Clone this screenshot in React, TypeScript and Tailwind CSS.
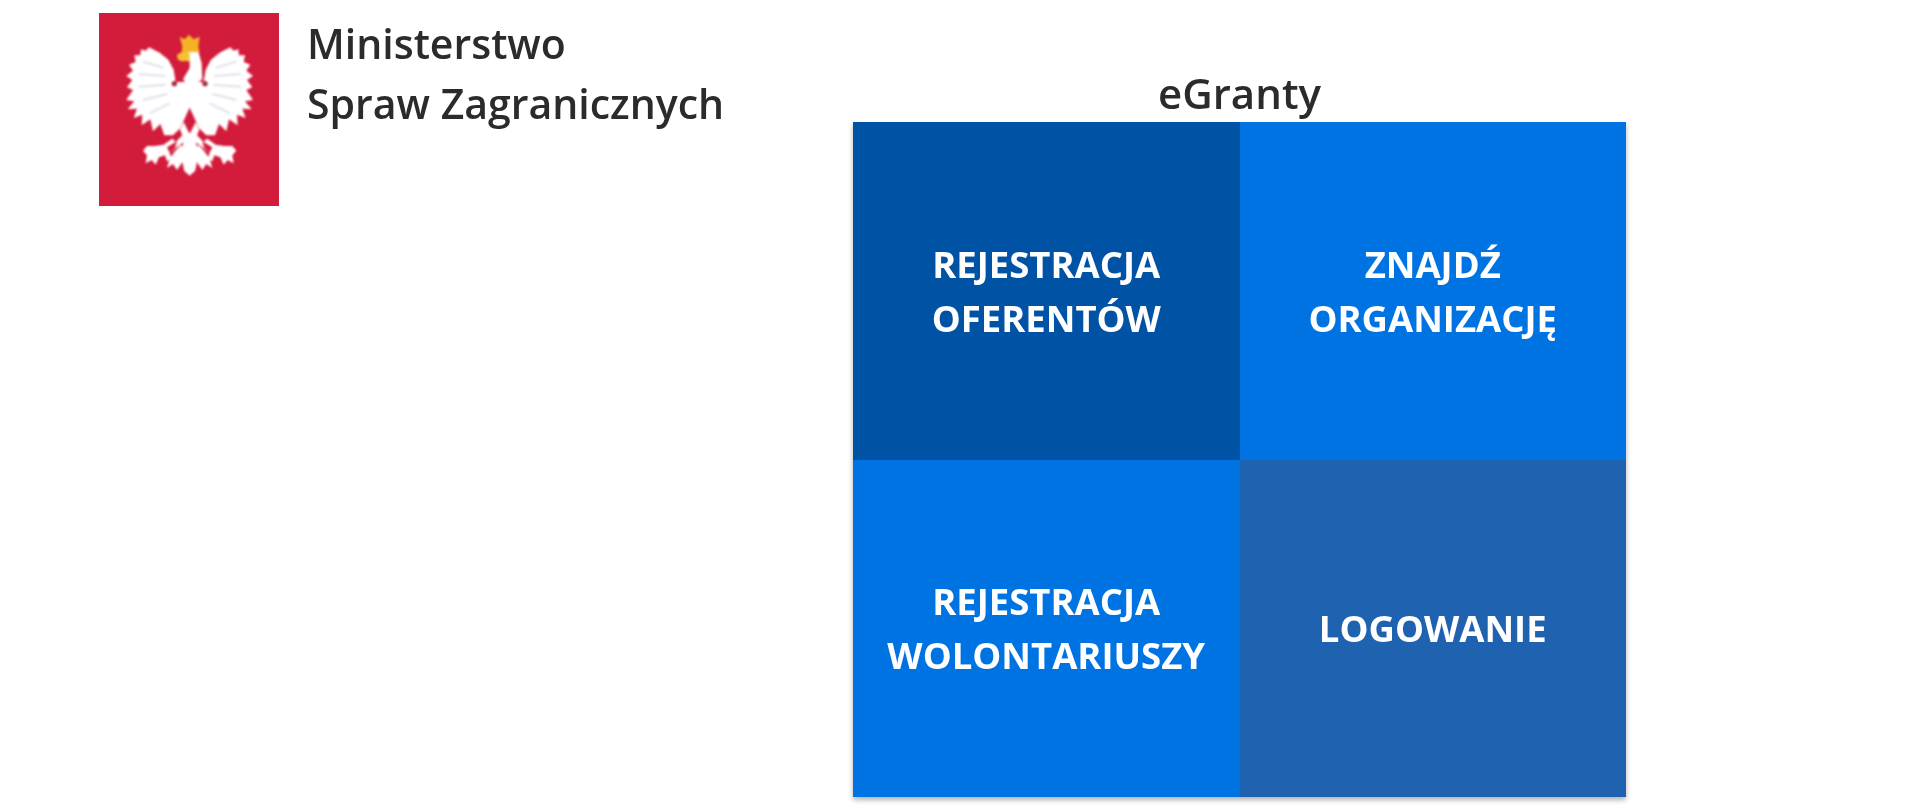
const font = "font-['Open_Sans','Liberation_Sans',sans-serif]";

const tiles = [
    { lines: ['REJESTRACJA', 'OFERENTÓW'], color: 'bg-[#0052a5]' },
    { lines: ['ZNAJDŹ', 'ORGANIZACJĘ'], color: 'bg-[#0073e2]' },
    { lines: ['REJESTRACJA', 'WOLONTARIUSZY'], color: 'bg-[#0073e2]' },
    { lines: ['LOGOWANIE'], color: 'bg-[#1f63b0]' },
];

// half of the eagle, the other half is mirrored around x=300
function EagleHalf() {
    return (
        <g>
            {/* wing */}
            <path fill="#fff" d="M258 232 L252 195 L236 165 L210 144 L178 128 L168 138 L154 134 L152 152 L134 152 L138 172 L118 180 L130 198 L110 214 L128 226 L112 248 L130 256 L110 286 L134 290 L114 314 L142 312 L132 340 L158 330 L156 362 L182 344 L190 380 L212 358 L224 392 L262 392 L304 300 L304 232 Z" />
            {/* feather shading */}
            <path fill="none" stroke="#dde1e9" strokeWidth="6" d="M222 190 L160 170 M226 214 L148 208 M228 240 L146 246 M232 268 L160 286 M240 296 L180 326" />
            {/* leg and talons */}
            <path fill="#fff" d="M282 352 L262 392 L222 420 L196 424 L172 424 L160 438 L172 452 L168 476 L186 466 L198 480 L208 458 L226 452 L232 470 L246 462 L240 444 L272 420 L304 396 Z" />
            <path fill="#fff" d="M274 420 L256 440 L240 462 L232 490 L250 478 L262 496 L276 476 L284 440 Z" />
            {/* tail */}
            <path fill="#fff" d="M286 386 L280 420 L268 446 L262 482 L278 472 L284 500 L300 512 L304 512 L304 386 Z" />
            {/* red gap beside the neck and under the wing */}
            <circle cx="254" cy="237" r="8" fill="#a02a38" />
            <path fill="#d31b3b" d="M244 398 L270 372 L278 392 L258 412 Z" />
            <path fill="#d31b3b" d="M232 428 L262 410 L256 430 L240 444 Z" />
        </g>
    );
}

function Eagle() {
    return (
        <svg viewBox="28 25 540 579" className="h-full w-full blur-[1px]">
            <EagleHalf />
            <g transform="matrix(-1 0 0 1 600 0)">
                <EagleHalf />
            </g>
            {/* neck and head */}
            <path d="M272 150 L300 134 L326 140 L336 176 L338 224 L300 250 L280 224 L300 190 L300 170 L276 168 Z" fill="#fff" />
            <path d="M262 150 L284 138 L300 146 L300 168 L274 170 L264 164 Z" fill="#f4c22e" />
            <path d="M270 96 L285 104 L298 90 L312 104 L330 96 L326 128 L330 142 L276 142 L278 126 Z" fill="#f5b324" />
        </svg>
    );
}

export default function App() {
    return (
        <div className={`flex h-[810px] w-full overflow-hidden bg-white ${font}`}>
            <header className="flex w-[853px] shrink-0 items-start pl-[99px] pt-[13px]">
                <div className="h-[193px] w-[180px] shrink-0 bg-[#d31b3b] blur-[0.5px]">
                    <Eagle />
                </div>
                <h1 className="ml-[28px] text-[41px] font-semibold leading-[60px] text-[#2b2b2b] blur-[0.6px]">
                    Ministerstwo
                    <br />
                    Spraw Zagranicznych
                </h1>
            </header>
            <main className="flex w-[773px] shrink-0 flex-col">
                <h2 className="mt-[67px] mb-[3px] text-center text-[42px] font-semibold leading-[52px] text-[#2b2b2b] blur-[0.6px]">eGranty</h2>
                <div className="grid h-[675px] grid-cols-2 grid-rows-2 shadow-[0_3px_5px_rgba(0,0,0,0.3)]">
                    {tiles.map((tile, i) => (
                        <a key={i} className={`flex flex-col items-center justify-center text-[36.5px] font-bold leading-[54px] text-white ${tile.color}`}>
                            {tile.lines.map(line => (
                                <span key={line} className="blur-[0.6px]">{line}</span>
                            ))}
                        </a>
                    ))}
                </div>
            </main>
        </div>
    );
}
